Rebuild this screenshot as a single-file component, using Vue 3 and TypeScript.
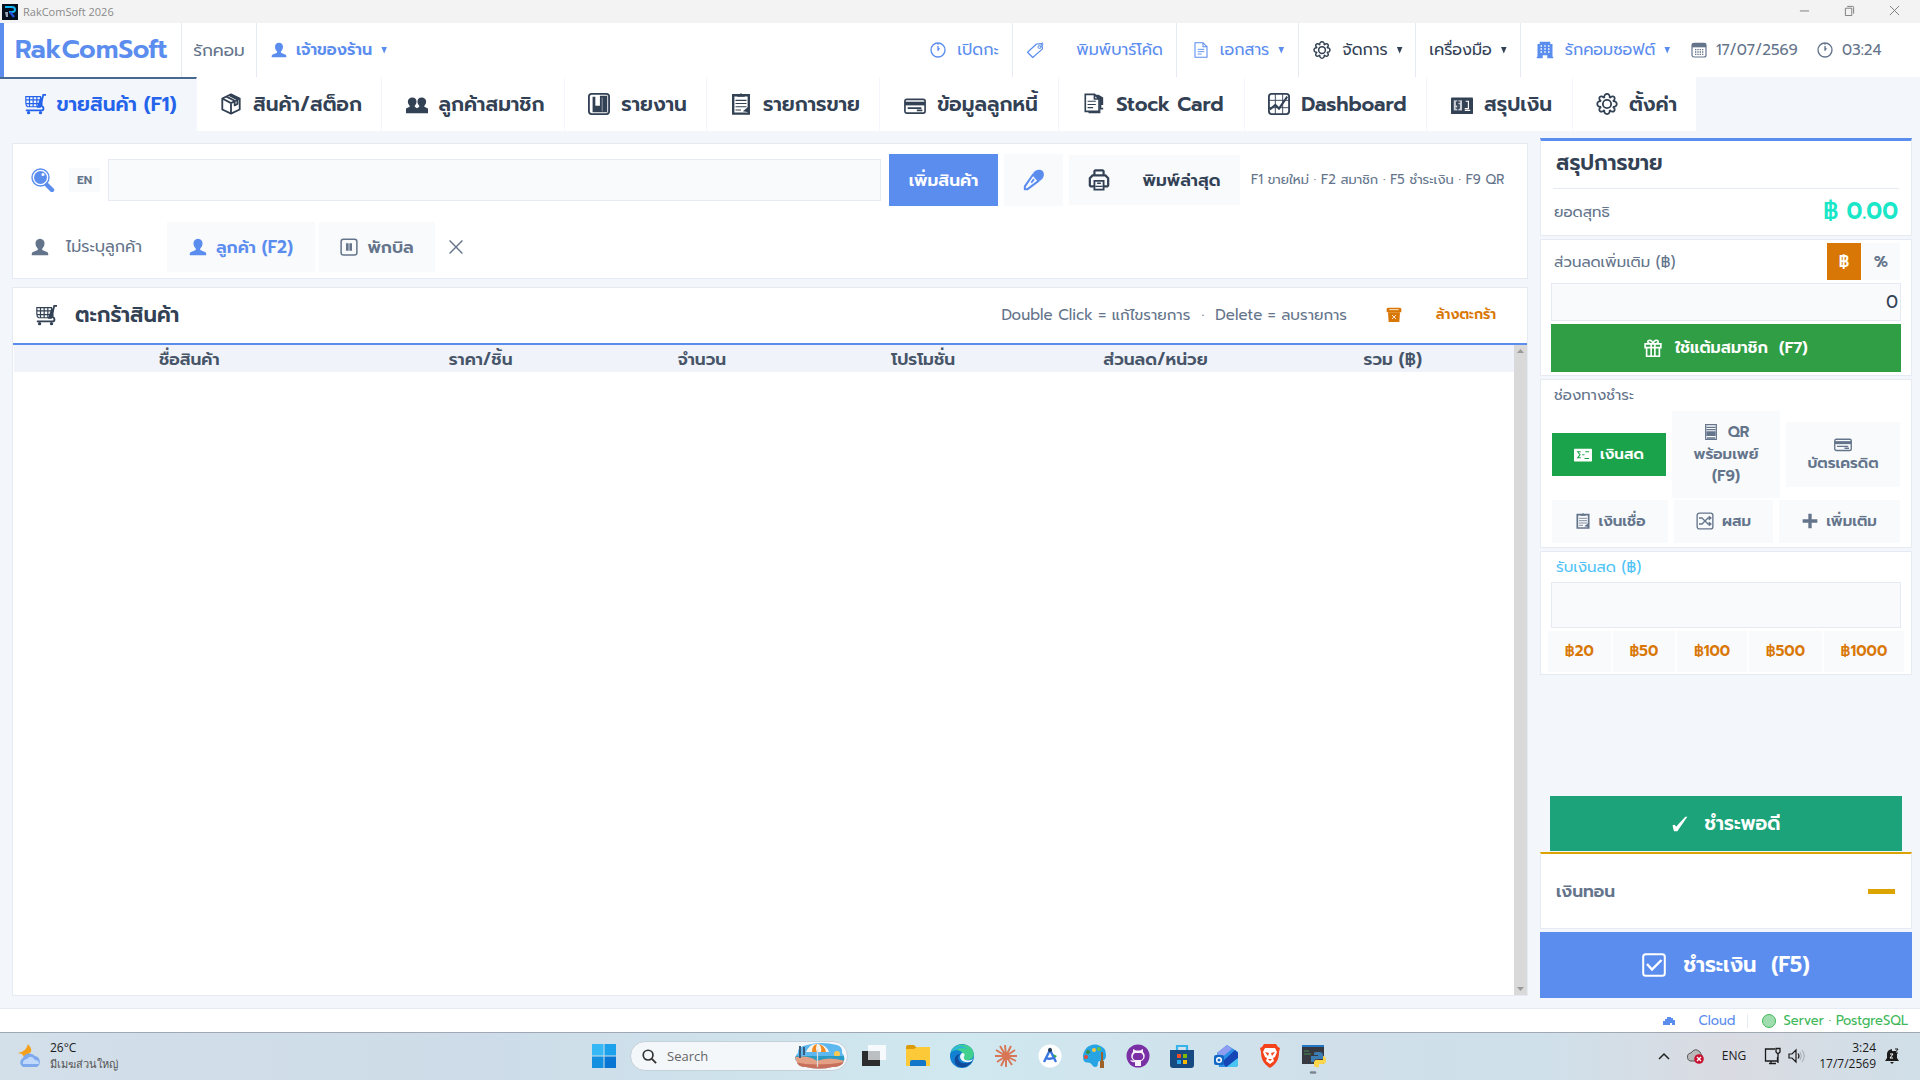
<script setup lang="ts">
import { ref } from 'vue'

interface Tab { id: string; label: string; icon: string; width: number }
interface Column { label: string; width: number }

const tabs: Tab[] = [
  { id: 'sell', label: 'ขายสินค้า (F1)', icon: 'cart', width: 197 },
  { id: 'stock', label: 'สินค้า/สต็อก', icon: 'box', width: 185 },
  { id: 'members', label: 'ลูกค้าสมาชิก', icon: 'users', width: 183 },
  { id: 'reports', label: 'รายงาน', icon: 'report', width: 142 },
  { id: 'sales', label: 'รายการขาย', icon: 'clipboard', width: 173 },
  { id: 'debtors', label: 'ข้อมูลลูกหนี้', icon: 'card', width: 179 },
  { id: 'stockcard', label: 'Stock Card', icon: 'docs', width: 186 },
  { id: 'dashboard', label: 'Dashboard', icon: 'chart', width: 182 },
  { id: 'money', label: 'สรุปเงิน', icon: 'money', width: 146 },
  { id: 'settings', label: 'ตั้งค่า', icon: 'gear', width: 124 },
]
const activeTab = ref('sell')

const columns: Column[] = [
  { label: 'ชื่อสินค้า', width: 350 },
  { label: 'ราคา/ชิ้น', width: 232 },
  { label: 'จำนวน', width: 210 },
  { label: 'โปรโมชั่น', width: 232 },
  { label: 'ส่วนลด/หน่วย', width: 232 },
  { label: 'รวม (฿)', width: 242 },
]
const columnTotal = columns.reduce((sum, c) => sum + c.width, 0)

const search = ref('')
const discount = ref('0')
const received = ref('')
const quickCash = [20, 50, 100, 500, 1000]
</script>

<template>
  <svg class="sprite" aria-hidden="true">
    <symbol id="i-cart" viewBox="0 0 24 24">
      <path d="M2 4h16v11H4q-2-1-2-4Z M2 7.500h16 M2 11.500h16 M6 4v11 M10 4v11 M14 4v11" fill="none" stroke="currentColor" stroke-width="1.300" />
      <path d="M24 2h-3l-2 8v4c3 1 3 5 0 5H2" fill="none" stroke="currentColor" stroke-width="2" />
      <path d="M17 7l3-3v9l-2 3h-4Z" fill="currentColor" />
      <circle cx="5" cy="21.500" r="1.800" fill="currentColor" /><circle cx="18" cy="21.500" r="1.800" fill="currentColor" />
    </symbol>
    <symbol id="i-box" viewBox="0 0 24 24">
      <path d="M12 1.500 21.500 6v12L12 22.500 2.500 18V6Z M2.500 6 12 11l9.500-5 M12 11v11 M7 4l9 4.500v5l3-1.500V7L10 2.500" fill="none" stroke="currentColor" stroke-width="2" stroke-linejoin="round" />
    </symbol>
    <symbol id="i-user" viewBox="0 0 24 24">
      <path d="M12 1c4 0 6 3 6 6 0 3-1 5-3 7v2l7 3c1 1 1 2 1 4H1c0-2 0-3 1-4l7-3v-2C7 12 6 10 6 7c0-3 2-6 6-6Z" fill="currentColor" />
    </symbol>
    <symbol id="i-users" viewBox="0 0 24 24">
      <path d="M7 5c3 0 4.500 2 4.500 4.500S10 13 9.500 14v1l2.500 1.500 2.500-1.500v-1c-.5-1-2-2-2-4.500S14 5 17 5s5 2 5 4.500-1.500 3.500-2 4.500v1l4 2v5H0v-5l4-2v-1c-.5-1-2-2-2-4.500S4 5 7 5Z" fill="currentColor" />
    </symbol>
    <symbol id="i-report" viewBox="0 0 24 24">
      <rect x="1" y="1" width="22" height="22" rx="3" fill="none" stroke="currentColor" stroke-width="2" />
      <path d="M5 4h3v10h5V3h8v18H5Z" fill="currentColor" /><path d="M15.500 5v15" stroke="#fff" stroke-width="1" opacity=".5" />
    </symbol>
    <symbol id="i-clipboard" viewBox="0 0 24 24">
      <path d="M3.500 2.500h17v20h-17Z" fill="none" stroke="currentColor" stroke-width="2.600" />
      <path d="M8 4V1.500h2.500L12 0l1.500 1.500H16V4Z" fill="currentColor" />
      <path d="M6 8h12M6 11.500h12M6 15h12M6 18.500h6" stroke="currentColor" stroke-width="1.200" />
      <path d="M14 20l6-5v6Z" fill="currentColor" />
    </symbol>
    <symbol id="i-card" viewBox="0 0 24 24">
      <rect x="1" y="7" width="22" height="15" rx="2" fill="none" stroke="currentColor" stroke-width="1.800" />
      <path d="M1 9.500h22v4H1Z" fill="currentColor" /><path d="M4 16.500h15M14 19h6" stroke="currentColor" stroke-width="1.800" />
    </symbol>
    <symbol id="i-docs" viewBox="0 0 24 24">
      <path d="M2.500 1.500h10l5 5V20h-15Z M12.500 1.500v5h5" fill="none" stroke="currentColor" stroke-width="1.800" />
      <path d="M5 9h9M5 12.500h9M5 16h6" stroke="currentColor" stroke-width="1.200" />
      <path d="M13 2h4l5 3v8h-2v3h2v2h-3v4H6v-2h12V7Z" fill="currentColor" />
    </symbol>
    <symbol id="i-chart" viewBox="0 0 24 24">
      <rect x="1" y="1" width="22" height="22" rx="3" fill="none" stroke="currentColor" stroke-width="2" />
      <path d="M8 1v22M16 1v22M1 8h22M1 16h22" stroke="currentColor" stroke-width="1" />
      <path d="m2 18 6-5 4 4L21 4" fill="none" stroke="currentColor" stroke-width="2.200" />
    </symbol>
    <symbol id="i-money" viewBox="0 0 24 24">
      <rect x="0" y="5" width="24" height="18" rx="1" fill="currentColor" />
      <path d="M3 8h9v11H3Z" fill="#fff" opacity=".75" />
      <path d="M10 10H6v3h3v3.500H5M7.500 8v11" fill="none" stroke="currentColor" stroke-width="1.300" />
      <path d="M16 9h3v8h-4M15 19h6" fill="none" stroke="#fff" stroke-width="1.300" />
    </symbol>
    <symbol id="i-cash" viewBox="0 0 24 24">
      <rect x="0" y="5" width="24" height="17" rx="1" fill="currentColor" />
      <path d="M9 9H5l3 4-3 4h4 M15 9h5M14 18h6M11 13h3" fill="none" stroke="#1aa34a" stroke-width="1.500" />
    </symbol>
    <symbol id="i-gear" viewBox="0 0 24 24">
      <circle cx="12" cy="12" r="4.500" fill="none" stroke="currentColor" stroke-width="2" />
      <path d="M9 5.500c-1-6 7-6 6 0 3.500-4.500 8 0 3.500 3.500 5.500-1 5.500 7 0 6 4.500 3.500 0 8-3.500 3.500 1 6-7 6-6 0-3.500 4.500-8 0-3.500-3.500-5.500 1-5.500-7 0-6C1 5.500 5.500 1 9 5.500Z" fill="none" stroke="currentColor" stroke-width="2" />
    </symbol>
    <symbol id="i-clock" viewBox="0 0 24 24">
      <circle cx="12" cy="12" r="10.500" fill="none" stroke="currentColor" stroke-width="2" />
      <path d="M12 13V6M12 12.500l2-3.500M12 2v2" stroke="currentColor" stroke-width="2" fill="none" />
    </symbol>
    <symbol id="i-tag" viewBox="0 0 24 24">
      <path d="m2 15 12-11 7-.5 1 7L9 22Z" fill="none" stroke="currentColor" stroke-width="1.600" stroke-linejoin="round" />
      <circle cx="18" cy="8" r="2" fill="none" stroke="currentColor" stroke-width="1.300" /><path d="M18 8q6-1 4-6" fill="none" stroke="currentColor" stroke-width="1.200" />
    </symbol>
    <symbol id="i-doc" viewBox="0 0 24 24">
      <path d="M3 1h12l6 6v16H3Z M15 1v6h6" fill="none" stroke="currentColor" stroke-width="1.600" />
      <path d="M7 11h10M7 14.500h10M7 18h6" stroke="currentColor" stroke-width="1.400" />
    </symbol>
    <symbol id="i-building" viewBox="0 0 24 24">
      <path d="M5 4V1h14v3h3v17h1v2h-8v-4H9v4H1v-2h1V4Z" fill="currentColor" />
      <path d="M6 6.500h12M6 10.500h12M6 14.500h12" stroke="#fff" stroke-width="2" stroke-dasharray="2 3" />
    </symbol>
    <symbol id="i-calendar" viewBox="0 0 24 24">
      <rect x="1.500" y="2" width="21" height="20.500" rx="3" fill="none" stroke="currentColor" stroke-width="1.800" />
      <path d="M1.500 2h21v6h-21Z" fill="currentColor" />
      <path d="M6 11.500h13M6 15h13M6 18.500h13" stroke="currentColor" stroke-width="2" stroke-dasharray="2 1.500" />
    </symbol>
    <symbol id="i-search" viewBox="0 0 24 24">
      <circle cx="9.500" cy="9.500" r="8.500" fill="#fff" stroke="currentColor" stroke-width="1.400" />
      <circle cx="9.500" cy="9.500" r="6.500" fill="currentColor" /><circle cx="12" cy="6.500" r="1.500" fill="#fff" />
      <path d="m16 17 5 5" stroke="currentColor" stroke-width="4.500" stroke-linecap="round" />
    </symbol>
    <symbol id="i-mic" viewBox="0 0 24 24">
      <path d="M11 5c2-5 9-5 11-2 2 4 0 8-4 10Z" fill="currentColor" />
      <path d="M11 6 2 19v3h3l12-9Z" fill="none" stroke="currentColor" stroke-width="2.200" stroke-linejoin="round" />
      <path d="m9 15 3-4" stroke="currentColor" stroke-width="2" />
    </symbol>
    <symbol id="i-print" viewBox="0 0 24 24">
      <path d="M7 7V2.500L8 1.500h8l1 1V7 M7 19H3l-1-1V10l3-3h14l3 3v8l-1 1h-4" fill="none" stroke="currentColor" stroke-width="2.400" />
      <path d="M7 13h10v9.500H7Z" fill="none" stroke="currentColor" stroke-width="2" /><path d="M10 15.500h4M8 19h8" stroke="currentColor" stroke-width="1.500" />
    </symbol>
    <symbol id="i-pause" viewBox="0 0 24 24">
      <rect x="1.500" y="1.500" width="21" height="21" rx="3" fill="none" stroke="currentColor" stroke-width="2" />
      <path d="M8 7h3.500v10H8ZM12.500 7H16v10h-3.500Z" fill="currentColor" />
    </symbol>
    <symbol id="i-trash" viewBox="0 0 24 24">
      <path d="M1 3q0-2 3-2h16q3 0 3 2v5H1Z" fill="currentColor" />
      <path d="M3 8h18l-1 14.500H4Z" fill="currentColor" /><path d="M5 4h14M9 12l6 6M15 12l-6 6" stroke="#fff" stroke-width="1.200" />
    </symbol>
    <symbol id="i-gift" viewBox="0 0 24 24">
      <path d="M1.500 6.500h21v5h-21ZM3.500 11.500V23h17V11.500M9.500 6.500V23M14.500 6.500V23" fill="none" stroke="currentColor" stroke-width="2.200" />
      <path d="M12 6C10 0 5 1 5 4l2 2M12 6c2-6 7-5 7-2l-2 2" fill="none" stroke="currentColor" stroke-width="2.200" />
    </symbol>
    <symbol id="i-phone" viewBox="0 0 24 24">
      <path d="M4 1h16v22H4Z" fill="none" stroke="currentColor" stroke-width="1.800" />
      <path d="M5 5h14M5 8.500h14" stroke="currentColor" stroke-width="1.800" /><path d="M5 11h14v7H5ZM6 20h12v2H6Z" fill="currentColor" />
    </symbol>
    <symbol id="i-shuffle" viewBox="0 0 24 24">
      <rect x="1.500" y="1.500" width="21" height="21" rx="3" fill="none" stroke="currentColor" stroke-width="1.800" />
      <path d="M4 8h4l8 8h3M4 16h4l8-8h3M17 5.500 20 8l-3 2.500M17 13.500l3 2.500-3 2.500" fill="none" stroke="currentColor" stroke-width="1.700" />
    </symbol>
    <symbol id="i-plus" viewBox="0 0 24 24"><path d="M12 1v22M1 12h22" stroke="currentColor" stroke-width="5" /></symbol>
    <symbol id="i-tick" viewBox="0 0 24 24"><path d="M1 14c2-2 4-1 5 2L20 1h3L8 23H3C2 19 1 17 1 14Z" fill="currentColor" /></symbol>
    <symbol id="i-checkbox" viewBox="0 0 24 24">
      <rect x="1.200" y="1.200" width="21.600" height="21.600" rx="2.500" fill="none" stroke="currentColor" stroke-width="2" />
      <path d="m5 11 5 5.500L19.500 7" fill="none" stroke="currentColor" stroke-width="2.400" />
    </symbol>
    <symbol id="i-close" viewBox="0 0 24 24"><path d="m1 1 22 22M23 1 1 23" stroke="currentColor" stroke-width="2.400" /></symbol>
  </svg>

  <div class="screen">
    <header class="titlebar">
      <svg class="app-icon" viewBox="0 0 16 16"><rect width="16" height="16" fill="#07101f" /><path d="M3 3h7q3 0 3 2.500T10 8H7" fill="none" stroke="#12b5f5" stroke-width="2" /><path d="m8 8 4 5" stroke="#2451d8" stroke-width="2.400" /><path d="M3 8h3v5H4Z" fill="#9aa7b4" /></svg>
      <span class="app-title">RakComSoft 2026</span>
      <div class="window-buttons">
        <button aria-label="Minimize"><svg viewBox="0 0 12 12"><path d="M1 6.500h10" /></svg></button>
        <button aria-label="Restore"><svg viewBox="0 0 12 12"><path d="M1.500 3.500h7v8h-7ZM3.500 1.500h6q1 0 1 1v7" /></svg></button>
        <button aria-label="Close"><svg viewBox="0 0 12 12"><path d="m1 1 10 10M11 1 1 11" /></svg></button>
      </div>
    </header>

    <div class="topbar">
      <div class="brand">RakComSoft</div>
      <div class="shop">รักคอม</div>
      <button class="owner"><svg class="ic16"><use href="#i-user" /></svg>เจ้าของร้าน<i class="caret" /></button>
      <nav class="menu">
        <button class="m-shift"><svg class="ic16"><use href="#i-clock" /></svg>เปิดกะ</button>
        <button class="m-barcode"><svg class="ic18"><use href="#i-tag" /></svg>พิมพ์บาร์โค้ด</button>
        <button class="m-docs"><svg class="ic16"><use href="#i-doc" /></svg>เอกสาร<i class="caret" /></button>
        <button class="m-manage dark"><svg class="ic18"><use href="#i-gear" /></svg>จัดการ<i class="caret" /></button>
        <button class="m-tools dark">เครื่องมือ<i class="caret" /></button>
        <button class="m-branch"><svg class="ic18"><use href="#i-building" /></svg>รักคอมซอฟต์<i class="caret" /></button>
        <span class="stamp date"><svg class="ic16"><use href="#i-calendar" /></svg>17/07/2569</span>
        <span class="stamp time"><svg class="ic16"><use href="#i-clock" /></svg>03:24</span>
      </nav>
    </div>

    <nav class="tabs">
      <button v-for="t in tabs" :key="t.id" class="tab" :class="{ active: t.id === activeTab }" :style="{ width: t.width + 'px' }" @click="activeTab = t.id">
        <svg class="ic22"><use :href="'#i-' + t.icon" /></svg><span>{{ t.label }}</span>
      </button>
    </nav>

    <main class="body">
      <div class="left">
        <section class="card search-card">
          <div class="row search-row">
            <label class="search-icon" for="search" aria-label="ค้นหา"><svg class="ic24"><use href="#i-search" /></svg></label>
            <button class="lang">EN</button>
            <input id="search" v-model="search" class="field search-input" type="text" />
            <button class="add">เพิ่มสินค้า</button>
            <button class="mic" aria-label="Voice"><svg class="ic22"><use href="#i-mic" /></svg></button>
            <button class="print"><svg class="ic22"><use href="#i-print" /></svg>พิมพ์ล่าสุด</button>
            <span class="hint">F1 ขายใหม่ · F2 สมาชิก · F5 ชำระเงิน · F9 QR</span>
          </div>
          <div class="row customer-row">
            <span class="no-customer"><svg class="ic18"><use href="#i-user" /></svg>ไม่ระบุลูกค้า</span>
            <button class="soft customer"><svg class="ic18"><use href="#i-user" /></svg>ลูกค้า (F2)</button>
            <button class="soft hold"><svg class="ic18"><use href="#i-pause" /></svg>พักบิล</button>
            <button class="clear" aria-label="Clear"><svg class="ic14"><use href="#i-close" /></svg></button>
          </div>
        </section>

        <section class="card cart">
          <div class="cart-head">
            <svg class="ic22"><use href="#i-cart" /></svg>
            <h2>ตะกร้าสินค้า</h2>
            <span class="tips">Double Click = แก้ไขรายการ&nbsp; ·&nbsp; Delete = ลบรายการ</span>
            <button class="empty"><svg class="ic16"><use href="#i-trash" /></svg>ล้างตะกร้า</button>
          </div>
          <div class="cart-body">
            <table>
              <colgroup><col v-for="c in columns" :key="c.label" :style="{ width: (c.width / columnTotal) * 100 + '%' }" /></colgroup>
              <thead><tr><th v-for="c in columns" :key="c.label">{{ c.label }}</th></tr></thead>
              <tbody />
            </table>
            <div class="scroll"><i class="up" /><i class="down" /></div>
          </div>
        </section>
      </div>

      <aside class="right">
        <section class="card summary">
          <h2>สรุปการขาย</h2>
          <div class="net"><span>ยอดสุทธิ</span><strong>฿ 0.00</strong></div>
        </section>

        <section class="card discount">
          <div class="line"><label for="discount">ส่วนลดเพิ่มเติม (฿)</label><button class="unit on">฿</button><button class="unit">%</button></div>
          <input id="discount" v-model="discount" class="field" type="text" />
          <button class="points"><svg class="ic18"><use href="#i-gift" /></svg>ใช้แต้มสมาชิก&nbsp; (F7)</button>
        </section>

        <section class="card channels">
          <p>ช่องทางชำระ</p>
          <div class="pay-row first">
            <button class="pay cash"><svg class="ic18"><use href="#i-cash" /></svg>เงินสด</button>
            <button class="pay qr"><span class="inline"><svg class="ic16"><use href="#i-phone" /></svg>QR</span><span>พร้อมเพย์</span><span>(F9)</span></button>
            <button class="pay credit"><svg class="ic18"><use href="#i-card" /></svg><span>บัตรเครดิต</span></button>
          </div>
          <div class="pay-row second">
            <button class="pay debt"><svg class="ic16"><use href="#i-clipboard" /></svg>เงินเชื่อ</button>
            <button class="pay mixed"><svg class="ic18"><use href="#i-shuffle" /></svg>ผสม</button>
            <button class="pay more"><svg class="ic16"><use href="#i-plus" /></svg>เพิ่มเติม</button>
          </div>
        </section>

        <section class="card receive">
          <label for="received">รับเงินสด (฿)</label>
          <input id="received" v-model="received" class="field" type="text" />
          <div class="quick"><button v-for="q in quickCash" :key="q" @click="received = String(q)">฿{{ q }}</button></div>
        </section>

        <div class="space" />
        <button class="exact"><svg class="ic16"><use href="#i-tick" /></svg>ชำระพอดี</button>
        <section class="card change"><span>เงินทอน</span><i class="dash" /></section>
        <button class="checkout"><svg class="ic24"><use href="#i-checkbox" /></svg>ชำระเงิน&nbsp; (F5)</button>
      </aside>
    </main>

    <footer class="status">
      <svg class="cloud" viewBox="0 0 12 10"><path d="M0 9V5h2V3h2V1h4v1h2v2h2v5h-3V7H7v2Z" fill="currentColor" /></svg>
      <span class="cloud-text">Cloud</span>
      <span class="server"><i class="dot" />Server · PostgreSQL</span>
    </footer>

    <div class="taskbar">
      <div class="weather">
        <svg viewBox="0 0 24 24"><path d="M10 0c2 3 4 4 3 8L6 13 4 10 0 9c4-1 8-2 10-9Z" fill="#f5a11c" /><path d="M5 23a5 5 0 0 1 0-9 7 7 0 0 1 12-2 6 6 0 0 1 2 11Z" fill="#7ea9ee" /><path d="M5 20a4 4 0 0 1 4-5q4-5 8 1 4 0 4 4Z" fill="#c0d8fa" /></svg>
        <div><b>26°C</b><span>มีเมฆส่วนใหญ่</span></div>
      </div>

      <div class="apps">
        <svg class="app" viewBox="0 0 24 24"><path d="M0 0h11.500v11.500H0Z" fill="#35b8f5" /><path d="M12.500 0H24v11.500H12.500Z" fill="#1ca2ec" /><path d="M0 12.500h11.500V24H0Z" fill="#1490e0" /><path d="M12.500 12.500H24V24H12.500Z" fill="#0876d2" /></svg>
        <label class="task-search">
          <svg viewBox="0 0 16 16"><circle cx="6.500" cy="6.500" r="5.200" fill="none" stroke="#333" stroke-width="1.800" /><path d="m10.500 10.500 4.500 4.500" stroke="#333" stroke-width="2" /></svg>
          <input type="text" placeholder="Search" aria-label="Search" />
          <svg class="beach" viewBox="0 0 50 26"><clipPath id="beach-clip"><path d="M12 2Q26-2 42 2q6 2 5 8 3 2 2 8-2 6-12 6-12 3-26 0-8 0-9-5-4-5 1-9-1-6 9-8Z" /></clipPath><g clip-path="url(#beach-clip)"><rect width="50" height="26" fill="#5cb8ee" /><circle cx="42" cy="11" r="3" fill="#ffc94f" /><path d="M0 13h50v5H0Z" fill="#2a9bc4" /><path d="M0 14q15-2 22 4 12-5 28 0v9H0Z" fill="#e3a084" /><path d="M0 19q20 5 50 0v8H0Z" fill="#c9705c" /></g><path d="M5 3v12M9 4v8" stroke="#3c5a7a" stroke-width="2" /><path d="M11 9q4-9 11-8 9 0 12 8Z" fill="#f7f1e8" /><path d="M17 9q0-7 5-8-2 5 0 8ZM26 9q1-5-2-8 6 2 7 8Z" fill="#ef8a1e" /><path d="M22.500 6v18" stroke="#ddd" stroke-width="1.200" /></svg>
        </label>
        <svg class="app" viewBox="0 0 24 24"><path d="M0 7h18v15H0Z" fill="#2b2c2e" /><path d="M6 1h18v15H6Z" fill="#fff" opacity=".8" /><path d="M6 7h12v9H6Z" fill="#bcbfc2" /></svg>
        <svg class="app" viewBox="0 0 24 24"><path d="M0 3q0-2 2-2h6l3 3v4H0Z" fill="#dc9a08" /><path d="M0 5h8l3-2h13v19H0Z" fill="#fcc938" /><path d="M4 22v-4q0-2 2-2h12q2 0 2 2v4Z" fill="#1377c9" /></svg>
        <svg class="app" viewBox="0 0 24 24"><circle cx="12" cy="12" r="12" fill="#1381d1" /><path d="M1 8C4-1 17-2 22 5c4 6 1 12-6 11-4 0-2-2-2-5-3-6-10-6-13-3Z" fill="#41cf8e" /><path d="M1 8C4 1 12 0 18 5c-7-2-13 1-17 3Z" fill="#2cb7dc" /><path d="M8 13c0 7 8 8 14 4-4 8-15 8-17 2-1-4 0-8 5-9Z" fill="#11499b" /><path d="M12 9c3 0 3 2 2 4-1 3 3 4 7 3l2-1q-2 4-7 3c-7-1-7-7-4-9Z" fill="#e7f7fa" /></svg>
        <svg class="app" viewBox="0 0 24 24"><path d="M12 12 11 1m1 11 5-10m-5 10 9-6m-9 6 11 0m-11 0 10 5m-10-5 6 9m-6-9 0 11m0-11-5 10m5-10-9 6m9-6-11 0m11 0L2 6m10 6L6 2" stroke="#d87554" stroke-width="1.900" /></svg>
        <svg class="app" viewBox="0 0 24 24"><circle cx="12" cy="12" r="11.500" fill="#fff" /><path d="m6 18 6-12 6 12M8 14q4 2 9-1" fill="none" stroke="#3c76e0" stroke-width="2.400" /><circle cx="12" cy="6" r="2" fill="#21384d" /><path d="m15 10 4 2-2 2Z" fill="#34a853" /></svg>
        <svg class="app" viewBox="0 0 24 24"><path d="M1 13C1 5 8-1 16 1q8 2 8 10c0 6-4 6-6 6-4 0 0 6-5 6-2 0-3-3-5-4s-7 1-7-6Z" fill="#27a4e4" /><circle cx="12" cy="6" r="2" fill="#fbc83c" /><circle cx="6" cy="8" r="2" fill="#3c8d3f" /><circle cx="4" cy="13" r="2" fill="#e54b32" /><circle cx="17" cy="5" r="2" fill="#5fc64c" /><path d="M19 8v9h-1v7h4v-7h-1V8Z" fill="#9c6229" /></svg>
        <svg class="app" viewBox="0 0 24 24"><circle cx="12" cy="12" r="11.500" fill="#7a30a4" /><path d="M9 22v-4c-3 1-4-1-5-2 2 0 3 1 5 1-4-1-5-6-2-9V5l3 1.500h4L17 5v3c3 3 2 8-2 9v5Z" fill="#f7effb" /><path d="M9 16c-3-1-3-5 0-7h6c3 2 3 6 0 7Z" fill="#7a30a4" /></svg>
        <svg class="app" viewBox="0 0 24 24"><path d="M7 7V2h10v5" fill="none" stroke="#35b4ec" stroke-width="2.200" /><path d="M0 6h24v15q0 3-3 3H3q-3 0-3-3Z" fill="#174a80" /><path d="M7 10h4v4H7Z" fill="#f25022" /><path d="M13 10h4v4h-4Z" fill="#7fba00" /><path d="M7 16h4v4H7Z" fill="#28a8ea" /><path d="M13 16h4v4h-4Z" fill="#ffb900" /></svg>
        <svg class="app" viewBox="0 0 24 24"><path d="M3 9 13 1l11 7v12q0 3-3 3H5Z" fill="#2c8ee5" /><path d="m3 9 10-8 5 4L7 14Z" fill="#8e9df2" /><path d="m8 18 13-12 3 3v5L12 23Z" fill="#1646b5" /><path d="m13 23 11-9v6q0 3-3 3Z" fill="#49c5f2" /><rect y="11" width="10" height="10" rx="2" fill="#1267c5" /><circle cx="5" cy="16" r="2.300" fill="none" stroke="#fff" stroke-width="1.500" /></svg>
        <svg class="app" viewBox="0 0 24 24"><path d="M6 0h12l2 3 2 1-1 4c0 8-3 12-9 16C6 20 3 16 3 8L2 4l2-1Z" fill="#f4421b" /><path d="M7 4h10l2 4-2 5-2 1 1 3-4 3-4-3 1-3-2-1-2-5Z" fill="#fff" /><path d="m7 8 4 1-1 3ZM17 8l-4 1 1 3ZM10 15h4l-2 2Z" fill="#f4421b" /></svg>
        <svg class="app running" viewBox="0 0 24 30"><path d="M0 1h22v19H0Z" fill="#363a40" /><path d="M0 1h22v2H0Z" fill="#2276c4" /><path d="M2 7h5M2 10h7" stroke="#448c54" /><path d="M13 8h4q4 0 4 3v4h-6q-3 0-3 3H9v-6h7v-1h-4V9Z" fill="#3c7cb4" /><path d="M21 12q3 0 3 4t-3 4h-4v3q-5 1-5-2v-3q1-3 4-2h5Z" fill="#fbd54a" /><path d="M9 28.500h4" stroke="#7d868e" stroke-width="2.500" stroke-linecap="round" /></svg>
      </div>

      <div class="tray">
        <svg class="chev" viewBox="0 0 12 8"><path d="m1 7 5-5 5 5" fill="none" stroke="#222" stroke-width="1.500" /></svg>
        <svg class="drive" viewBox="0 0 18 16"><path d="M5 13a4 4 0 0 1-1-8Q8-1 13 4l2 4-6 5Z" fill="#b9b9b9" stroke="#555" /><circle cx="12" cy="11" r="4.800" fill="#c8102e" /><path d="m10 9 4 4m0-4-4 4" stroke="#fff" stroke-width="1.300" /></svg>
        <span class="eng">ENG</span>
        <svg class="net-icon" viewBox="0 0 18 18"><path d="M11 2H1.500v12h12V10M5 16.500h7M7 14v2M14 7v9M12 1.500h4V5l-2 2-2-2Z" fill="none" stroke="#1b1b1b" stroke-width="1.300" /></svg>
        <svg class="vol" viewBox="0 0 18 16"><path d="M1 6h3l4-4v12l-4-4H1ZM10 5.500q2 2.500 0 5" fill="none" stroke="#1b1b1b" stroke-width="1.200" /><path d="M12 4q3 4 0 8M14 2q4.500 6 0 12" fill="none" stroke="#a2a9b0" /></svg>
        <div class="clock"><span>3:24</span><span>17/7/2569</span></div>
        <svg class="bell" viewBox="0 0 14 16"><path d="M0 13 2 10V6q0-4 5-5v2h4v2h1v5l2 3ZM5 14h4l-2 2Z" fill="#1b1b1b" /><path d="M5 6h3l-3 4h3" fill="none" stroke="#fff" /><path d="M10 1h3l-3 4h3" fill="none" stroke="#1b1b1b" /></svg>
      </div>
    </div>
  </div>
</template>

<style>
body { margin: 0; background: #f3f6fb; }
</style>

<style scoped>
* { box-sizing: border-box; }
.sprite { position: absolute; width: 0; height: 0; }
.screen { display: flex; flex-direction: column; min-height: 100vh; background: #f3f6fb; color: #334155; font-family: "Prompt", "Inter", "Noto Sans Thai", "Noto Sans", sans-serif; font-size: 16px; line-height: 24px; white-space: nowrap; }
button { display: flex; align-items: center; justify-content: center; border: 0; margin: 0; padding: 0; background: none; color: inherit; font: inherit; white-space: nowrap; }
input { font: inherit; color: inherit; min-width: 0; outline: none; }
h2, p { margin: 0; }
svg { flex: none; display: block; }
.ic14 { width: 14px; height: 14px; }
.ic16 { width: 16px; height: 16px; }
.ic18 { width: 18px; height: 18px; }
.ic22 { width: 22px; height: 22px; }
.ic24 { width: 24px; height: 24px; }
.caret { width: 6px; height: 7px; margin-left: 9px; background: currentColor; clip-path: polygon(0 0, 100% 0, 50% 100%); }
.card { background: #fff; border: 1px solid #e6ebf3; }
.field { background: #f8fafc; border: 1px solid #e6ebf3; border-radius: 0; }

.titlebar { display: flex; align-items: center; height: 23px; padding: 0 3px 0 2px; background: #f3f3f3; color: #8a8a8a; font-family: "Open Sans", sans-serif; font-size: 12px; line-height: 16px; }
.app-icon { width: 16px; height: 16px; margin-right: 5px; }
.app-title { font-size: 11px; }
.window-buttons { display: flex; margin-left: auto; }
.window-buttons button { width: 45px; height: 20px; margin-bottom: 2px; }
.window-buttons svg { width: 11px; height: 11px; fill: none; stroke: #777; }

.topbar { display: flex; align-items: stretch; height: 54px; background: #fff; border-left: 4px solid #5b8def; }
.brand { display: flex; align-items: center; width: 178px; padding-left: 11px; border-right: 1px solid #e6ebf3; color: #5b8def; font-size: 26px; font-weight: 600; }
.shop { display: flex; align-items: center; justify-content: center; width: 75px; border-right: 1px solid #e6ebf3; color: #64748b; font-size: 17px; }
.owner { color: #5b8def; font-weight: 600; padding-left: 14px; }
.owner svg { margin-right: 9px; }
.menu { display: flex; margin-left: auto; color: #5b8def; }
.menu button, .stamp { display: flex; align-items: center; justify-content: center; }
.menu button { border-right: 1px solid #e6ebf3; }
.menu svg { margin-right: 11px; }
.menu .dark { color: #334155; }
.menu .m-shift { width: 96px; }
.menu .m-barcode { width: 164px; }
.menu .m-barcode svg { margin-right: 32px; }
.menu .m-docs { width: 122px; padding-left: 2px; }
.menu .m-manage { width: 117px; padding-left: 2px; }
.menu .m-tools { width: 105px; }
.menu .m-branch { width: 158px; padding-left: 6px; border: 0; }
.menu .stamp { justify-content: flex-start; color: #64748b; font-size: 15px; }
.menu .stamp svg { margin-right: 9px; }
.menu .date { width: 126px; padding-left: 12px; }
.menu .time { width: 115px; padding-left: 12px; }

.tabs { display: flex; height: 54px; }
.tab { flex: none; gap: 11px; padding-left: 4px; background: #fff; border-right: 1px solid #f3f6fb; font-size: 20px; font-weight: 600; }
.tab.active { padding-bottom: 2px; background: #f3f6fb; color: #2563eb; border-top: 2px solid #47698f; }

.body { flex: 1; display: flex; gap: 12px; padding: 7px 8px 10px 12px; }
.left { flex: 1; min-width: 0; display: flex; flex-direction: column; gap: 8px; padding: 5px 0 2px; }
.row { display: flex; align-items: center; }
.search-card { height: 136px; padding: 10px 16px 5px 18px; }
.search-row { height: 52px; }
.search-icon { margin-right: 14px; color: #5b8def; }
.lang { width: 31px; height: 24px; margin-right: 8px; background: #f8fafc; color: #64748b; font-size: 12px; font-weight: 600; }
.search-input { flex: 1; height: 42px; margin-right: 8px; }
.add { width: 109px; height: 52px; margin-right: 6px; background: #5b8def; color: #fff; font-size: 17px; font-weight: 600; }
.mic { width: 59px; height: 52px; margin-right: 6px; background: #f8fafc; color: #5b8def; }
.print { width: 171px; height: 50px; gap: 32px; margin-right: 11px; background: #f8fafc; font-size: 17px; font-weight: 600; }
.hint { width: 260px; color: #64748b; font-size: 13px; }
.customer-row { height: 50px; margin-top: 16px; }
.no-customer { display: flex; align-items: center; gap: 17px; width: 136px; color: #64748b; }
.soft { height: 50px; gap: 9px; margin-right: 4px; background: #f8fafc; color: #64748b; font-size: 17px; font-weight: 600; }
.customer { width: 148px; color: #5b8def; }
.hold { width: 116px; }
.clear { width: 34px; height: 34px; color: #64748b; }

.cart { flex: 1; display: flex; flex-direction: column; }
.cart-head { display: flex; align-items: center; height: 57px; padding: 0 27px 2px 22px; border-bottom: 2px solid #5b8def; }
h2 { font-size: 21px; font-weight: 600; line-height: 28px; }
.cart-head h2 { margin-left: 18px; }
.tips { margin-left: auto; color: #64748b; font-size: 15px; }
.empty { width: 118px; margin-left: 35px; gap: 34px; color: #d97706; font-size: 14px; font-weight: 600; }
.cart-body { flex: 1; display: flex; align-items: stretch; padding-left: 1px; }
table { flex: 1; align-self: flex-start; table-layout: fixed; border-collapse: collapse; width: 100%; }
th { height: 27px; padding: 1px 0 0; background: #f0f3f9; color: #475569; font-size: 17px; font-weight: 600; line-height: 26px; }
.scroll { display: flex; flex-direction: column; justify-content: space-between; align-items: center; width: 13px; padding: 4px 0; background: #d9d9d9; }
.scroll i { width: 7px; height: 4px; background: #9a9a9a; }
.scroll .up { clip-path: polygon(50% 0, 100% 100%, 0 100%); }
.scroll .down { clip-path: polygon(0 0, 100% 0, 50% 100%); }

.right { flex: none; display: flex; flex-direction: column; gap: 3px; width: 372px; }
.summary { height: 98px; padding: 8px 12px 0; border-top: 3px solid #5b8def; }
.summary h2 { height: 40px; padding-left: 3px; border-bottom: 1px solid #e6ebf3; }
.net { display: flex; align-items: center; justify-content: space-between; height: 46px; padding: 0 1px; color: #64748b; font-size: 15px; }
.net strong { color: #1ae6c8; font-size: 23px; font-weight: 600; }
.discount { height: 137px; padding: 3px 10px; }
.line { display: flex; align-items: center; gap: 1px; height: 37px; padding: 0 1px 0 3px; }
.line label { flex: 1; color: #64748b; font-size: 15px; }
.unit { width: 38px; height: 37px; background: #f8fafc; color: #64748b; font-weight: 600; }
.unit.on { width: 34px; background: #d97706; color: #fff; }
.discount .field { display: block; width: 100%; height: 38px; margin: 3px 0; padding: 0 2px; text-align: right; font-size: 18px; }
.points { width: 100%; height: 48px; gap: 13px; background: #2f9e44; color: #fff; font-weight: 600; }
.channels { height: 169px; padding: 5px 11px 4px; }
.channels p { padding-left: 2px; height: 26px; line-height: 20px; color: #64748b; font-size: 15px; }
.pay-row { display: flex; align-items: center; gap: 6px; }
.pay { height: 43px; gap: 8px; padding-bottom: 1px; background: #f8fafc; color: #64748b; font-size: 15px; font-weight: 600; line-height: 22px; }
.cash { flex: 114; background: #1aa34a; color: #fff; }
.qr { flex: 108; height: 87px; flex-direction: column; gap: 0; }
.inline { display: flex; align-items: center; gap: 9px; }
.credit { flex: 114; height: 65px; flex-direction: column; gap: 0; }
.second { margin-top: 2px; }
.debt { flex: 116; }
.mixed { flex: 99; }
.more { flex: 121; }
.receive { height: 124px; padding: 3px 7px; }
.receive label { display: block; height: 27px; padding-left: 8px; color: #4fc3f7; font-size: 15px; }
.receive .field { display: block; width: 350px; max-width: calc(100% - 6px); height: 46px; margin: 0 3px 3px; padding: 0 8px; text-align: right; }
.quick { display: flex; gap: 2px; }
.quick button { flex: 1 1 auto; height: 41px; padding-bottom: 1px; background: #f8fafc; color: #d97706; font-size: 15px; font-weight: 600; }
.space { flex: 1; min-height: 20px; }
.exact { height: 55px; margin: 0 10px -2px; gap: 17px; background: #1ca37a; color: #fff; font-size: 19px; font-weight: 600; }
.change { display: flex; align-items: center; justify-content: space-between; height: 77px; padding: 0 16px 0 15px; border-top: 2px solid #dba400; color: #64748b; font-size: 17px; font-weight: 600; }
.dash { width: 27px; height: 5px; background: #dba400; }
.checkout { height: 66px; gap: 17px; background: #5b8def; color: #fff; font-size: 21px; font-weight: 600; }

.status { display: flex; align-items: center; justify-content: flex-end; height: 24px; padding-right: 12px; background: #fff; border-top: 1px solid #e6ebf3; color: #5b8def; font-size: 13px; }
.cloud { width: 12px; height: 10px; }
.cloud-text { margin-left: 24px; padding-right: 12px; border-right: 1px solid #e6ebf3; line-height: 14px; }
.server { display: flex; align-items: center; margin-left: 14px; color: #40b85a; }
.dot { width: 14px; height: 14px; margin-right: 7px; border: 1px solid #40b85a; border-radius: 50%; background: #9fdcae; }

.taskbar { display: grid; grid-template-columns: 1fr auto 1fr; align-items: center; height: 48px; padding-bottom: 1px; border-top: 1px solid #9fa8b3; background: linear-gradient(90deg, #d3dfe9 0%, #cddce8 25%, #d0e8f0 50%, #d0dfe9 70%, #cfe0ea 80%, #dadbe2 90%, #d0dfe8 100%); color: #1b1b1b; font-family: "Open Sans", sans-serif; font-size: 12px; line-height: 16px; }
.weather { display: flex; align-items: center; gap: 8px; padding-left: 18px; }
.weather svg { width: 24px; height: 24px; }
.weather b, .weather span { display: block; font-weight: 400; }
.weather span { color: #555; font-size: 11px; }
.apps { display: flex; align-items: center; gap: 20px; padding-right: 2px; }
.app { width: 24px; height: 24px; }
.running { height: 30px; margin-top: 6px; }
.task-search { display: flex; align-items: center; width: 218px; height: 30px; margin: 0 -6px; padding: 0 2px 0 11px; border: 1px solid #c4d0da; border-radius: 15px; background: #f3f7fa; }
.task-search > svg { width: 15px; height: 15px; }
.task-search input { flex: 1; width: 0; margin-left: 10px; padding: 0; border: 0; background: none; font-size: 13px; }
.task-search input::placeholder { color: #666; opacity: 1; }
.task-search .beach { width: 50px; height: 26px; }
.tray { display: flex; align-items: center; justify-content: flex-end; padding-right: 21px; }
.chev { width: 12px; height: 8px; margin-right: 17px; }
.drive { width: 18px; height: 16px; margin-right: 17px; }
.eng { margin-right: 18px; }
.net-icon { width: 18px; height: 18px; margin-right: 6px; }
.vol { width: 18px; height: 16px; margin-right: 13px; }
.clock { display: flex; flex-direction: column; align-items: flex-end; margin-right: 9px; }
.bell { width: 14px; height: 16px; }
</style>
